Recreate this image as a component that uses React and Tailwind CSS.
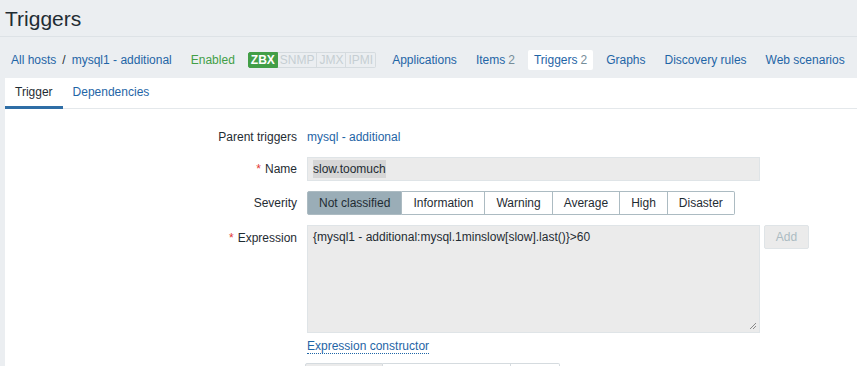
import React from "react";

const navLinks = [
  { label: "Applications" },
  { label: "Items", count: 2 },
  { label: "Triggers", count: 2, active: true },
  { label: "Graphs" },
  { label: "Discovery rules" },
  { label: "Web scenarios" },
];

const severities = ["Not classified", "Information", "Warning", "Average", "High", "Disaster"];

function Label({ children, required }) {
  return (
    <div className="text-right text-[#1f2c33] leading-[24px] whitespace-nowrap">
      {required && <span className="text-[#e33734] mr-[4px]">*</span>}
      {children}
    </div>
  );
}

export default function App() {
  return (
    <div className="min-h-screen bg-[#ebeef1] font-['Liberation_Sans',Arial,sans-serif] text-[12px] overflow-hidden">
      {/* header */}
      <div className="h-[37px] border-b border-[#dde2e6] px-[5px] flex items-center">
        <h1 className="text-[21px] text-[#1f2c33] leading-none mt-[1px]">Triggers</h1>
      </div>

      {/* host nav */}
      <div className="h-[41px] pt-[5px] flex items-center pl-[5px] whitespace-nowrap">
        <a className="px-[6px] text-[#1f65a6]">All hosts</a>
        <span className="text-[#1f2c33]">/</span>
        <a className="px-[6px] text-[#1f65a6]">mysql1 - additional</a>
        <span className="ml-[7px] px-[6px] text-[#429e47]">Enabled</span>
        <div className="ml-[7px] flex h-[16px] text-[12px] leading-[14px]">
          <span className="px-[2px] bg-[#429e47] border border-[#429e47] text-white font-bold rounded-l-[2px]">ZBX</span>
          <span className="px-[2px] border border-[#d5dbdf] border-l-0 text-[#c6ced3]">SNMP</span>
          <span className="px-[2px] border border-[#d5dbdf] border-l-0 text-[#c6ced3]">JMX</span>
          <span className="px-[2px] border border-[#d5dbdf] border-l-0 text-[#c6ced3] rounded-r-[2px]">IPMI</span>
        </div>
        <div className="ml-[10px] flex gap-[7px] items-center">
          {navLinks.map((l) => (
            <a
              key={l.label}
              className={`px-[6px] h-[20px] leading-[20px] text-[#1f65a6] ${
                l.active ? "bg-white rounded-[2px]" : ""
              }`}
            >
              {l.label}
              {l.count && <span className="text-[#768d99] ml-[3px]">{l.count}</span>}
            </a>
          ))}
        </div>
      </div>

      {/* form panel */}
      <div className="ml-[5px] bg-white min-h-[300px]">
        <div className="flex h-[31px] border-b border-[#e4e8eb]">
          <div className="px-[10px] h-[31px] leading-[29px] text-[#1f2c33] border-b-[3px] border-[#2f6ea6] -mb-px">
            Trigger
          </div>
          <div className="px-[10px] leading-[29px] text-[#1f65a6]">Dependencies</div>
        </div>

        <div className="grid grid-cols-[292px_1fr] gap-x-[10px] gap-y-[10px] pt-[14px]">
          <div className="h-[24px] pt-[4px] text-right text-[#1f2c33] leading-[20px]">Parent triggers</div>
          <a className="h-[24px] pt-[4px] leading-[20px] text-[#1f65a6]">mysql - additional</a>

          <Label required>Name</Label>
          <div className="w-[453px] h-[24px] bg-[#ebebeb] border border-[#dfe4e7] px-[5px] flex items-center text-[#1f2c33]">
            <span className="bg-[#d6d6d6]">slow.toomuch</span>
          </div>

          <Label>Severity</Label>
          <div className="flex h-[24px]">
            {severities.map((s, i) => (
              <div
                key={s}
                className={`px-[11px] leading-[22px] border border-[#acbbc2] ${i > 0 ? "border-l-0" : "rounded-l-[2px]"} ${
                  i === severities.length - 1 ? "rounded-r-[2px]" : ""
                } ${i === 0 ? "bg-[#9aadb7] text-[#1f2c33]" : "bg-white text-[#1f2c33]"}`}
              >
                {s}
              </div>
            ))}
          </div>

          <div className="pt-[1px]">
            <Label required>Expression</Label>
          </div>
          <div>
            <div className="flex items-start gap-[4px]">
              <div className="relative w-[453px] h-[108px] bg-[#ebebeb] border border-[#dfe4e7] px-[5px] pt-[2px] text-[#1f2c33]">
                {"{mysql1 - additional:mysql.1minslow[slow].last()}>60"}
                <svg className="absolute right-[2px] bottom-[2px]" width="8" height="8" viewBox="0 0 8 8">
                  <path d="M7 1L1 7M7 4L4 7" stroke="#8a8a8a" strokeWidth="1" />
                </svg>
              </div>
              <button className="w-[45px] h-[24px] bg-[#ebebeb] border border-[#dfe4e7] rounded-[2px] text-[#acbbc2]">
                Add
              </button>
            </div>
            <a className="inline-block mt-[6px] text-[#1f65a6] border-b border-dotted border-[#1f65a6] leading-[14px]">
              Expression constructor
            </a>
          </div>

          <div className="-mt-[2px]">
            <Label>OK event generation</Label>
          </div>
          <div className="flex h-[24px] -mt-[2px] -ml-[2px]">
            <div className="w-[78px] text-center leading-[22px] border border-[#d5dbdf] rounded-l-[2px] bg-[#ebebeb] text-[#1f2c33]">Expression</div>
            <div className="w-[128px] text-center leading-[22px] border border-l-0 border-[#d5dbdf] text-[#1f2c33]">Recovery expression</div>
            <div className="w-[49px] text-center leading-[22px] border border-l-0 border-[#d5dbdf] rounded-r-[2px] text-[#1f2c33]">None</div>
          </div>
        </div>
      </div>
    </div>
  );
}
